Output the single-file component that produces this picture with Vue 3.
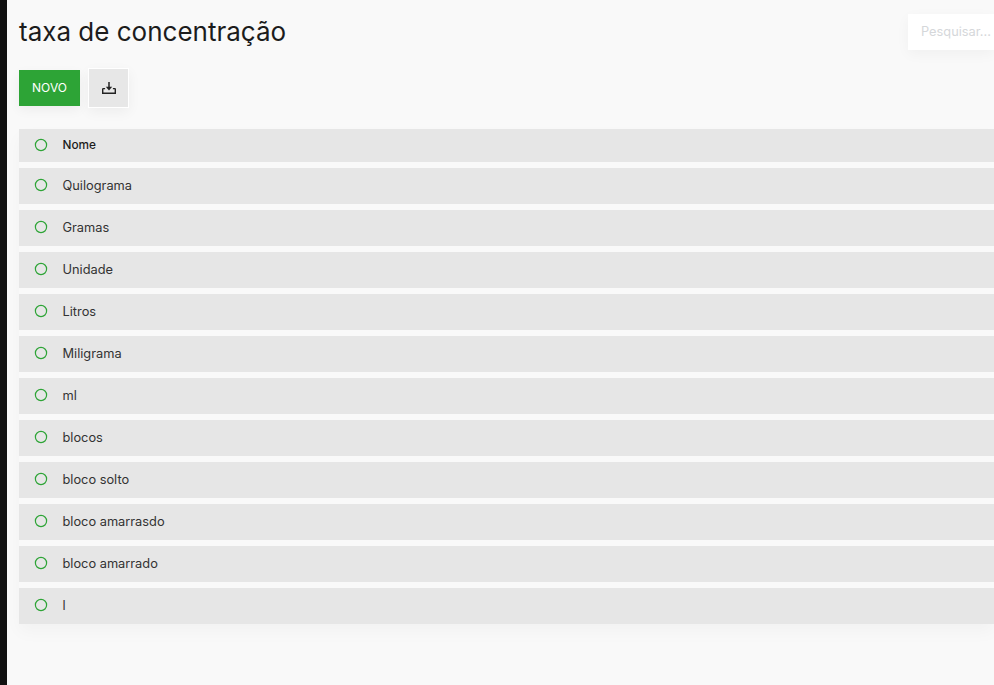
<script setup>
const rows = ['Quilograma','Gramas','Unidade','Litros','Miligrama','ml','blocos','bloco solto','bloco amarrasdo','bloco amarrado','l']
</script>

<template>
  <div class="shell">
    <aside class="rail"></aside>
    <main class="content">
      <header class="top">
        <h1 class="title">taxa de concentração</h1>
        <div class="search">Pesquisar...</div>
      </header>
      <div class="actions">
        <button class="btn-new">NOVO</button>
        <button class="btn-icon" aria-label="Exportar">
          <svg width="16" height="16" viewBox="0 0 16 16" fill="none">
            <path d="M8 2v6" stroke="#222" stroke-width="1.5"/>
            <path d="M4.8 6.8h6.4L8 10.6z" fill="#222"/>
            <path d="M1.7 8.6v4.7h12.6V8.6" stroke="#222" stroke-width="1.4"/>
            <path d="M1.7 8.6h2.4M11.9 8.6h2.4" stroke="#222" stroke-width="1.2"/>
          </svg>
        </button>
      </div>
      <div class="list">
        <div class="row head">
          <svg class="radio" width="14" height="14" viewBox="0 0 14 14"><circle cx="7" cy="7" r="5.6" fill="none" stroke="#2da436" stroke-width="1.2"/></svg>
          <span class="label">Nome</span>
        </div>
        <div v-for="r in rows" :key="r" class="row">
          <svg class="radio" width="14" height="14" viewBox="0 0 14 14"><circle cx="7" cy="7" r="5.6" fill="none" stroke="#2da436" stroke-width="1.2"/></svg>
          <span class="label">{{ r }}</span>
        </div>
      </div>
    </main>
  </div>
</template>

<style>
html, body { margin: 0; background: #f9f9f9; overflow: hidden; }
</style>

<style scoped>
.shell { display: flex; width: 994px; height: 685px; overflow: hidden; background: #f9f9f9; font-family: Inter, "Noto Sans", sans-serif; color: #212529; }
.rail { width: 7px; flex: none; background: #111; }
.content { flex: none; width: 987px; padding: 0 0 0 12px; box-sizing: border-box; }
.top { display: flex; justify-content: space-between; align-items: flex-start; height: 68px; }
.title { margin: 16px 0 0; font-size: 26px; line-height: 32px; font-weight: 400; color: #1c1c1c; }
.search { margin-top: 14px; width: 86px; height: 36px; line-height: 35px; padding-left: 13px; box-sizing: border-box; background: #fff; color: #d5d7da; font-size: 12.8px; box-shadow: 0 4px 14px rgba(0,0,0,.04); white-space: nowrap; overflow: hidden; }
.actions { display: flex; align-items: center; gap: 8px; height: 40px; }
.btn-new { width: 61px; height: 36px; border: 0; padding: 0 0 2px; background: #2da436; color: #fff; font: 400 12px Inter, sans-serif; box-shadow: 0 4px 12px rgba(0,0,0,.05); }
.btn-icon { display: flex; align-items: center; justify-content: center; width: 41px; height: 40px; padding: 0; background: #e7e7e7; border: 1px solid #fff; box-shadow: 0 4px 12px rgba(0,0,0,.05); }
.list { display: flex; flex-direction: column; gap: 6px; margin-top: 21px; box-shadow: 0 8px 16px rgba(0,0,0,.03); }
.row { display: flex; align-items: center; height: 36px; background: #e6e6e6; font-size: 12.8px; color: #333; }
.row.head { height: 33px; font-weight: 500; font-size: 11.8px; color: #1c1c1c; }
.radio { margin-left: 15px; margin-top: -2px; flex: none; }
.label { margin-left: 14.5px; margin-top: -2px; }
</style>
